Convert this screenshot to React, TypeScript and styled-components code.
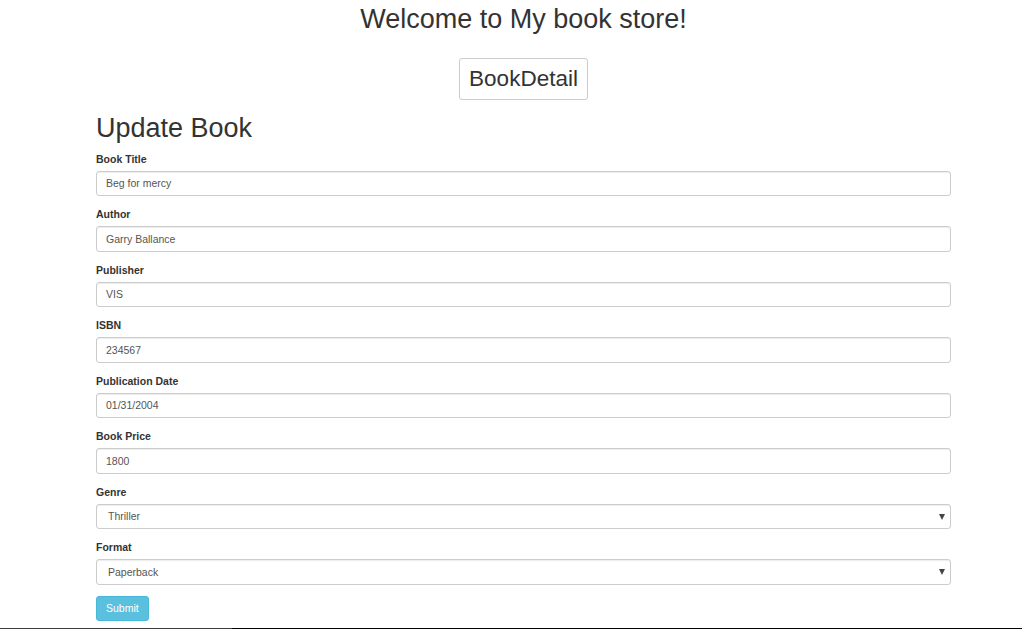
import React from "react";
import styled, { createGlobalStyle } from "styled-components";

const GlobalStyle = createGlobalStyle`
  html, body {
    margin: 0;
    padding: 0;
    background: #fff;
  }
  body {
    font-family: "Liberation Sans", Arial, sans-serif;
    color: #333;
  }
  * { box-sizing: border-box; }
`;

const Page = styled.div`
  min-height: 100vh;
  display: flex;
  flex-direction: column;
`;

const Main = styled.main`
  margin-left: 96px;
  width: 855px;
`;

const Title = styled.h1`
  margin: 5px 0 0;
  font-size: 27px;
  font-weight: 400;
  line-height: 29.7px;
  text-align: center;
  color: #333;
`;

const NavRow = styled.div`
  display: flex;
  justify-content: center;
  margin-top: 23px;
`;

const NavButton = styled.button`
  font-family: inherit;
  font-size: 22.5px;
  line-height: 31px;
  padding: 4.5px 9px;
  color: #333;
  background: #fff;
  border: 1px solid #ccc;
  border-radius: 3px;
  cursor: pointer;
`;

const Heading = styled.h2`
  margin: 14px 0 8.5px;
  font-size: 27px;
  font-weight: 400;
  line-height: 29.7px;
  color: #333;
`;

const Form = styled.form`
  display: flex;
  flex-direction: column;
`;

const FormGroup = styled.div`
  margin-bottom: 11.25px;
`;

const Label = styled.label`
  display: block;
  font-size: 10.5px;
  font-weight: 700;
  line-height: 15px;
  margin-bottom: 3.75px;
  color: #333;
`;

const Input = styled.input`
  display: block;
  width: 100%;
  height: 25.5px;
  padding: 4.5px 9px;
  font-family: inherit;
  font-size: 10.5px;
  line-height: 15px;
  color: #555;
  background: #fff;
  border: 1px solid #ccc;
  border-radius: 3px;
  box-shadow: inset 0 1px 1px rgba(0, 0, 0, 0.075);
  outline: none;
`;

const SelectWrap = styled.div`
  position: relative;
`;

const Select = styled.select`
  display: block;
  width: 100%;
  height: 25.5px;
  padding: 3px 9px 3px 11px;
  font-family: inherit;
  font-size: 10.5px;
  color: #555;
  background: #fff;
  border: 1px solid #ccc;
  border-radius: 3px;
  box-shadow: inset 0 1px 1px rgba(0, 0, 0, 0.075);
  appearance: none;
  -webkit-appearance: none;
  outline: none;
`;

const Arrow = styled.span`
  position: absolute;
  right: 6px;
  top: 10px;
  width: 0;
  height: 0;
  border-left: 3px solid transparent;
  border-right: 3px solid transparent;
  border-top: 6px solid #444;
  pointer-events: none;
`;

const SubmitRow = styled.div`
  display: flex;
`;

const SubmitButton = styled.button`
  font-family: inherit;
  font-size: 10.5px;
  line-height: 15px;
  padding: 4px 9px;
  color: #fff;
  background: #5bc0de;
  border: 1px solid #46b8da;
  border-radius: 3px;
  cursor: pointer;
`;

const BottomRule = styled.div`
  margin-top: auto;
  height: 1px;
  background: linear-gradient(to right, #3c3c3c 232px, #000 232px);
`;

type Field = { label: string; value: string };

const fields: Field[] = [
  { label: "Book Title", value: "Beg for mercy" },
  { label: "Author", value: "Garry Ballance" },
  { label: "Publisher", value: "VIS" },
  { label: "ISBN", value: "234567" },
  { label: "Publication Date", value: "01/31/2004" },
  { label: "Book Price", value: "1800" },
];

const selects: { label: string; options: string[] }[] = [
  { label: "Genre", options: ["Thriller", "Romance", "Fiction", "Biography"] },
  { label: "Format", options: ["Paperback", "Hardcover", "eBook"] },
];

export default function App() {
  return (
    <>
      <GlobalStyle />
      <Page>
        <Main>
          <Title>Welcome to My book store!</Title>
          <NavRow>
            <NavButton type="button">BookDetail</NavButton>
          </NavRow>
          <Heading>Update Book</Heading>
          <Form onSubmit={(e) => e.preventDefault()}>
            {fields.map((f) => (
              <FormGroup key={f.label}>
                <Label>{f.label}</Label>
                <Input type="text" defaultValue={f.value} />
              </FormGroup>
            ))}
            {selects.map((s) => (
              <FormGroup key={s.label}>
                <Label>{s.label}</Label>
                <SelectWrap>
                  <Select defaultValue={s.options[0]}>
                    {s.options.map((o) => (
                      <option key={o} value={o}>
                        {o}
                      </option>
                    ))}
                  </Select>
                  <Arrow />
                </SelectWrap>
              </FormGroup>
            ))}
            <SubmitRow>
              <SubmitButton type="submit">Submit</SubmitButton>
            </SubmitRow>
          </Form>
        </Main>
        <BottomRule />
      </Page>
    </>
  );
}
